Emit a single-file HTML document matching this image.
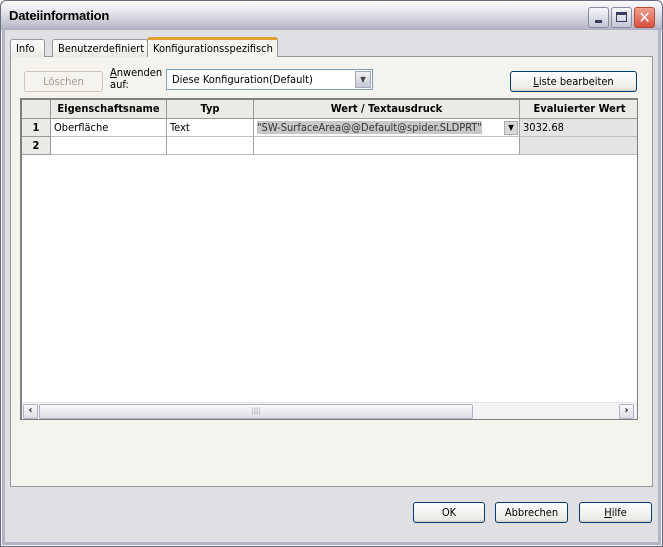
<!DOCTYPE html>
<html><head><meta charset="utf-8"><style>
*{box-sizing:border-box;margin:0;padding:0}
body{width:663px;height:547px;overflow:hidden;background:#fff;font-family:Tahoma,"DejaVu Sans Condensed","Liberation Sans",sans-serif;font-size:11px;color:#000;position:relative}
.a{position:absolute}
.win{left:0;top:0;width:663px;height:547px;background:#e0dfe3;border:1px solid #6b6d80;border-radius:6px 6px 0 0;box-shadow:inset 0 0 0 1px #f0f0f4,inset 0 0 0 4px #b4b4c4}
.title{left:1px;top:1px;width:661px;height:29px;border-radius:6px 6px 0 0;background:linear-gradient(#fbfbfd,#e3e3ec 40%,#c4c4d2 80%,#aeaec0)}
.title span{position:absolute;left:8px;top:7px;font-weight:bold;font-size:13px;color:#000;font-family:"Liberation Sans",sans-serif;letter-spacing:-0.2px}
.tb{top:7px;width:21px;height:21px;border:1px solid #8a8ba0;border-radius:3px;background:linear-gradient(#f6f6fa,#c4c5d6)}
.btn{border:1px solid #003c74;border-radius:3px;background:linear-gradient(#fff,#ecebe6 85%,#d6d0c5);text-align:center;line-height:19px}
.tab{top:39px;height:18px;border:1px solid #919b9c;border-bottom:none;border-radius:3px 3px 0 0;background:linear-gradient(#fff,#ecebe6);padding:2px 5px 0}
.cell{position:absolute;border-right:1px solid #a0a0a0;border-bottom:1px solid #c0c0c0;padding:2px 3px;white-space:nowrap;overflow:hidden}
.hd{background:#ebebe6;font-weight:bold;text-align:center;border-right:1px solid #999;border-bottom:1px solid #999}
</style></head><body>
<div class="a win"></div>
<div class="a title"><span>Dateiinformation</span></div>
<div class="a tb" style="left:588px"><div class="a" style="left:6px;top:12px;width:7px;height:3px;background:#3b3d5a"></div></div>
<div class="a tb" style="left:611px"><div class="a" style="left:4px;top:4px;width:11px;height:10px;border:1px solid #3b3d5a;border-top-width:3px"></div></div>
<div class="a tb" style="left:634px;border-color:#b54a3a;background:linear-gradient(#f2a090,#d85040);color:#fff;font-size:16px;font-weight:bold;text-align:center;line-height:19px">✕</div>

<div class="a" style="left:10px;top:56px;width:643px;height:431px;border:1px solid #919b9c;background:#f4f3ee"></div>
<div class="a tab" style="left:10px;width:35px">Info</div>
<div class="a tab" style="left:52px;width:96px">Benutzerdefiniert</div>
<div class="a tab" style="left:147px;top:37px;height:20px;width:131px;background:#f4f3ee;border-top:3px solid #e0a030">Konfigurationsspezifisch</div>

<div class="a btn" style="left:24px;top:71px;width:79px;height:21px;border-color:#c9c7ba;color:#a19f92;background:#f4f3ee">Löschen</div>
<div class="a" style="left:110px;top:67px;line-height:12px"><u>A</u>nwenden<br>auf:</div>
<div class="a" style="left:166px;top:69px;width:207px;height:21px;border:1px solid #7f9db9;background:#fff;padding:3px 5px">Diese Konfiguration(Default)</div>
<div class="a" style="left:355px;top:71px;width:16px;height:17px;background:linear-gradient(#f0f0f6,#c8c9d6);border:1px solid #a8a9bc;text-align:center;font-size:8px;line-height:16px;color:#444">▼</div>
<div class="a btn" style="left:510px;top:71px;width:127px;height:21px"><u>L</u>iste bearbeiten</div>

<div class="a" style="left:20px;top:98px;width:618px;height:322px;border:1px solid #7f7f7f;border-top-width:2px;border-left-width:2px;background:#fff;overflow:hidden">
<div class="a" style="left:0;top:0;width:616px;height:55px">
<div class="cell hd" style="left:0;top:0;width:29px;height:19px"></div>
<div class="cell hd" style="left:29px;top:0;width:116px;height:19px">Eigenschaftsname</div>
<div class="cell hd" style="left:145px;top:0;width:87px;height:19px">Typ</div>
<div class="cell hd" style="left:232px;top:0;width:266px;height:19px">Wert / Textausdruck</div>
<div class="cell hd" style="left:498px;top:0;width:120px;height:19px">Evaluierter Wert</div>
<div class="cell hd" style="left:0;top:19px;width:29px;height:18px">1</div>
<div class="cell" style="left:29px;top:19px;width:116px;height:18px">Oberfläche</div>
<div class="cell" style="left:145px;top:19px;width:87px;height:18px">Text</div>
<div class="cell" style="left:232px;top:19px;width:266px;height:18px"><span style="background:#c8c8c8;color:#333">"SW-SurfaceArea@@Default@spider.SLDPRT"</span></div>
<div class="a" style="left:482px;top:21px;width:14px;height:14px;background:#d8d8d8;border:1px solid #aaa;font-size:8px;text-align:center;line-height:12px">▼</div>
<div class="cell" style="left:498px;top:19px;width:120px;height:18px;background:#e4e4e4">3032.68</div>
<div class="cell hd" style="left:0;top:37px;width:29px;height:18px">2</div>
<div class="cell" style="left:29px;top:37px;width:116px;height:18px"></div>
<div class="cell" style="left:145px;top:37px;width:87px;height:18px"></div>
<div class="cell" style="left:232px;top:37px;width:266px;height:18px"></div>
<div class="cell" style="left:498px;top:37px;width:120px;height:18px;background:#e4e4e4"></div>
</div>
<div class="a" style="left:0;top:302px;width:616px;height:17px;background:#f3f3f6;border-top:1px solid #e6e6ea">
<div class="a" style="left:1px;top:1px;width:15px;height:15px;border:1px solid #b0b2c4;border-radius:2px;background:linear-gradient(#fafafc,#dcdce6);font-size:10px;text-align:center;line-height:12px;font-weight:bold">‹</div>
<div class="a" style="left:17px;top:1px;width:434px;height:15px;border:1px solid #b0b2c4;border-radius:2px;background:linear-gradient(#fafafc,#dcdce6);text-align:center;font-size:7px;line-height:13px;color:#999">||||</div>
<div class="a" style="left:597px;top:1px;width:15px;height:15px;border:1px solid #b0b2c4;border-radius:2px;background:linear-gradient(#fafafc,#dcdce6);font-size:10px;text-align:center;line-height:12px;font-weight:bold">›</div>
</div>
</div>

<div class="a btn" style="left:413px;top:502px;width:72px;height:21px">OK</div>
<div class="a btn" style="left:495px;top:502px;width:73px;height:21px">Abbrechen</div>
<div class="a btn" style="left:579px;top:502px;width:73px;height:21px"><u>H</u>ilfe</div>
</body></html>
